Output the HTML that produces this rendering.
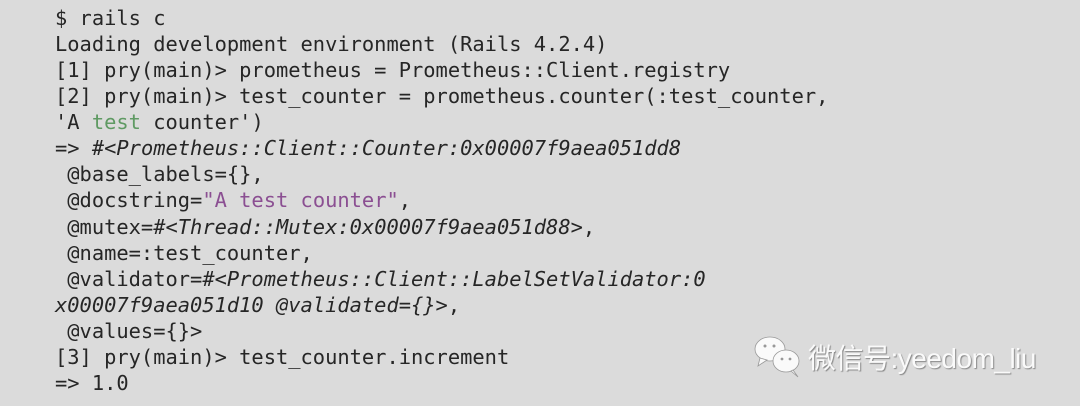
<!DOCTYPE html>
<html><head><meta charset="utf-8"><style>
html,body{margin:0;padding:0;}
body{width:1080px;height:406px;background:#dbdbdb;overflow:hidden;position:relative;}
pre{position:absolute;left:55px;top:5px;margin:0;font-family:"DejaVu Sans Mono","Liberation Mono",monospace;font-size:20.4px;line-height:26.07px;color:#262626;}
.g{color:#5f9a63}.p{color:#8b4f92}i{font-style:italic}
.wm{position:absolute;left:808px;top:337px;font-family:"Liberation Sans","Noto Sans CJK SC",sans-serif;font-size:28px;color:#fafafa;text-shadow:1px 1px 1px #888;white-space:nowrap;letter-spacing:-0.5px}
svg{position:absolute;left:753px;top:335px}
</style></head><body>
<pre>$ rails c
Loading development environment (Rails 4.2.4)
[1] pry(main)&gt; prometheus = Prometheus::Client.registry
[2] pry(main)&gt; test_counter = prometheus.counter(:test_counter,
'A <span class="g">test</span> counter')
=&gt; <i>#&lt;Prometheus::Client::Counter:0x00007f9aea051dd8</i>
 @base_labels={},
 @docstring=<span class="p">"A test counter"</span>,
 @mutex=<i>#&lt;Thread::Mutex:0x00007f9aea051d88&gt;</i>,
 @name=:test_counter,
 @validator=<i>#&lt;Prometheus::Client::LabelSetValidator:0
x00007f9aea051d10 @validated={}&gt;</i>,
 @values={}&gt;
[3] pry(main)&gt; test_counter.increment
=&gt; 1.0</pre>
<svg width="50" height="44" viewBox="0 0 50 44">
<g fill="#fafafa" stroke="#999" stroke-width="0.8">
<ellipse cx="17" cy="14" rx="15" ry="12"/>
<path d="M7 23 L5 31 L14 25 Z"/>
<ellipse cx="33" cy="26" rx="13" ry="11"/>
<path d="M40 35 L45 42 L38 36 Z"/>
</g>
<g fill="#999"><circle cx="12" cy="11" r="1.5"/><circle cx="21" cy="11" r="1.5"/><circle cx="29" cy="24" r="1.4"/><circle cx="37" cy="24" r="1.4"/></g>
</svg>
<div class="wm">微信号:yeedom_liu</div>
</body></html>
